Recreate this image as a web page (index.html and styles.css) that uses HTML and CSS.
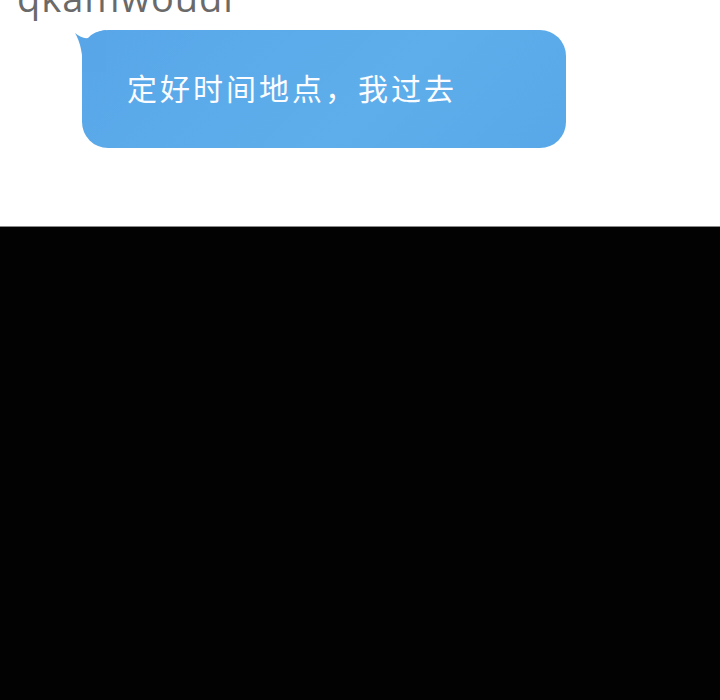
FILE: index.html
```html
<!DOCTYPE html>
<html lang="zh">
<head>
<meta charset="utf-8">
<link rel="stylesheet" href="styles.css">
</head>
<body>
<div class="page">
  <div class="top">
    <div class="name">qkamwoudi</div>
    <div class="bubble-row">
      <div class="bubble">
        <svg class="tail" width="32" height="42" viewBox="0 0 32 42"><path d="M1 3 Q8 9 14 8 Q20 1 32 0 L32 42 L9 42 Q9 16 1 3 Z" fill="#58a6e8"/></svg>
        <span class="msg">定好时间地点，我过去</span>
      </div>
    </div>
  </div>
  <div class="dark"></div>
</div>
</body>
</html>
```
FILE: styles.css
```css
html, body { margin: 0; padding: 0; background: #fff; }
.page { width: 720px; height: 700px; overflow: hidden; display: flex; flex-direction: column; }
.top { height: 226px; display: flex; flex-direction: column; overflow: hidden; }
.name {
  font-family: "Open Sans", sans-serif;
  font-size: 38px;
  line-height: 38px;
  color: #6a6a6a;
  margin: -22px 0 0 17px;
  letter-spacing: 1px;
  height: 38px;
}
.bubble-row { padding: 14px 0 0 82px; }
.bubble {
  position: relative;
  width: 484px;
  height: 118px;
  box-sizing: border-box;
  border-radius: 26px;
  background: linear-gradient(135deg, #58a6e8 0%, #5eaeeb 60%, #58a7e8 100%);
  display: flex;
  align-items: center;
  padding: 0 0 4px 45px;
}
.tail { position: absolute; left: -8px; top: 0; }
.msg {
  position: relative;
  font-family: "Noto Sans CJK SC", sans-serif;
  font-size: 30px;
  color: #fafcff;
  letter-spacing: 3px;
}
.dark { flex: 1; background: #020202; border-top: 1px solid #8a8a8a; }
```
